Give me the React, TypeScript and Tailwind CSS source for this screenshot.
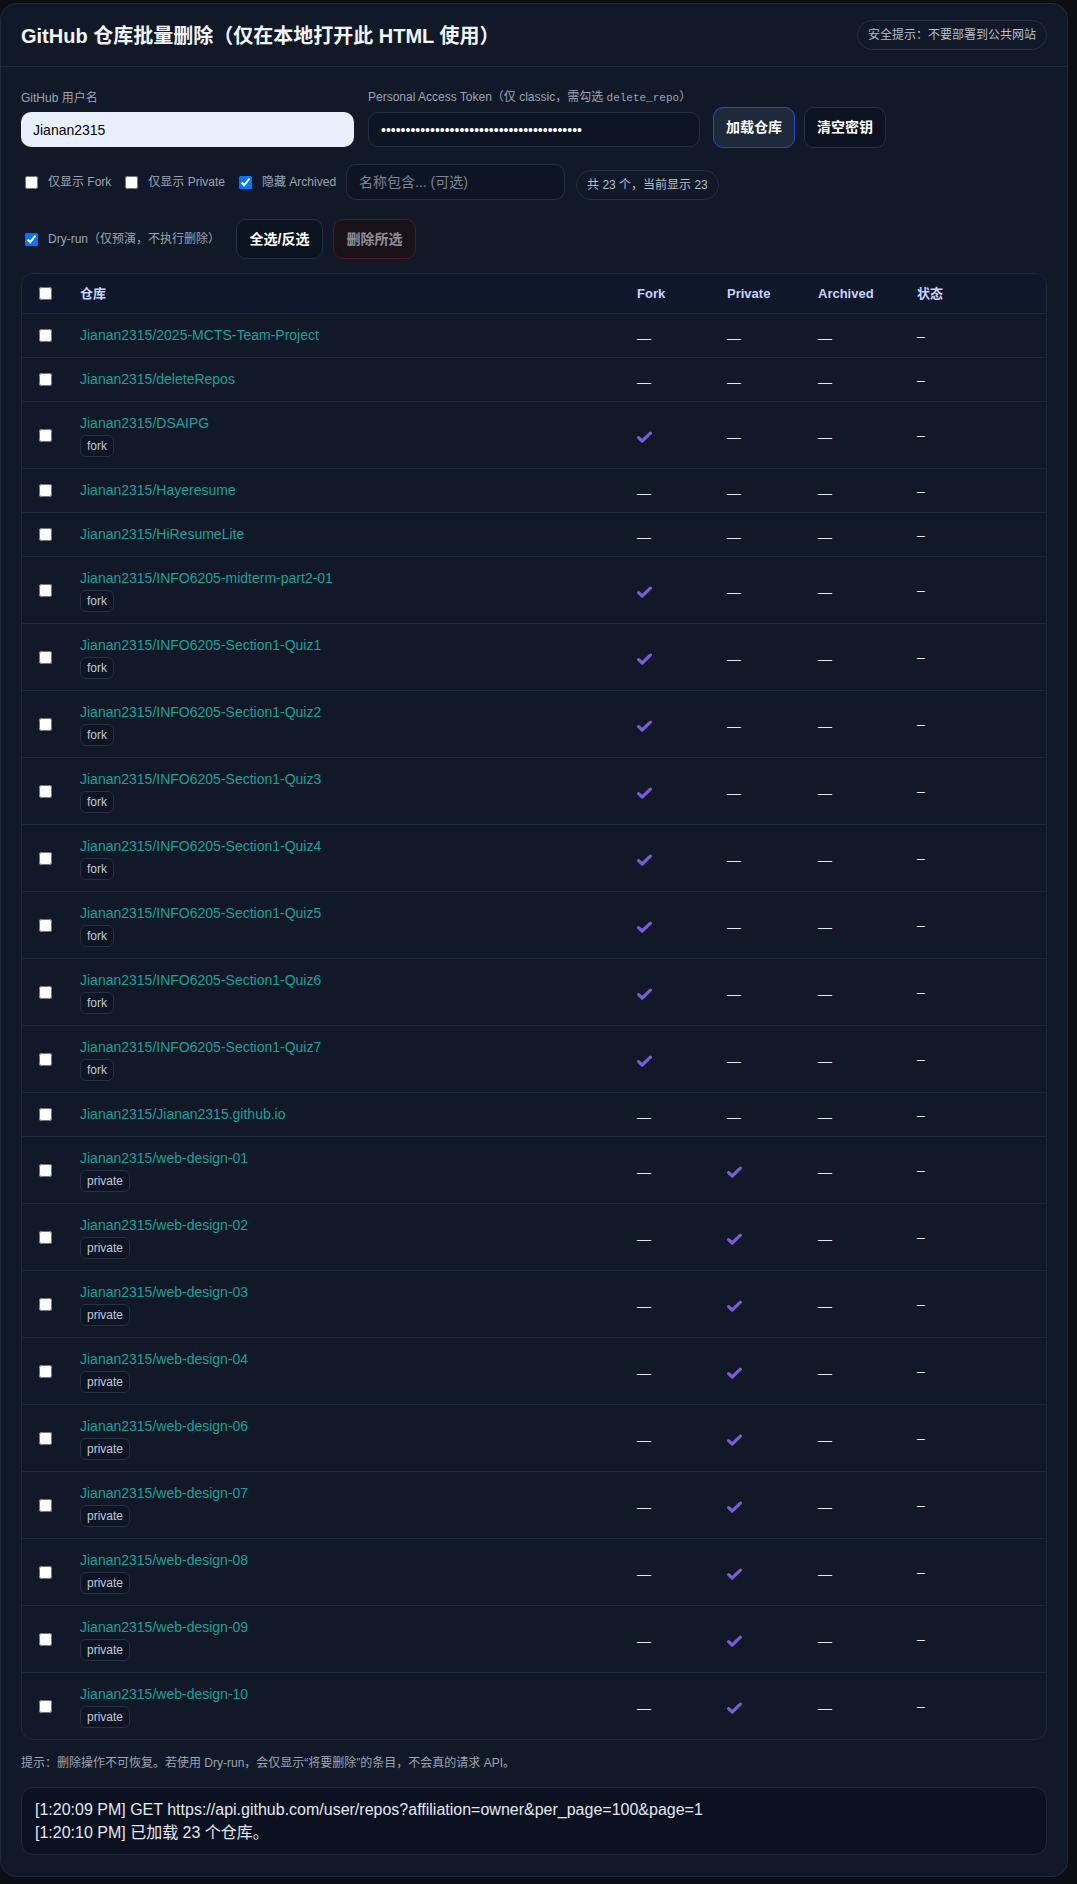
import { useState } from "react";

interface Repo {
  name: string;
  fork: boolean;
  priv: boolean;
}

const repos: Repo[] = [
  { name: "2025-MCTS-Team-Project", fork: false, priv: false },
  { name: "deleteRepos", fork: false, priv: false },
  { name: "DSAIPG", fork: true, priv: false },
  { name: "Hayeresume", fork: false, priv: false },
  { name: "HiResumeLite", fork: false, priv: false },
  { name: "INFO6205-midterm-part2-01", fork: true, priv: false },
  { name: "INFO6205-Section1-Quiz1", fork: true, priv: false },
  { name: "INFO6205-Section1-Quiz2", fork: true, priv: false },
  { name: "INFO6205-Section1-Quiz3", fork: true, priv: false },
  { name: "INFO6205-Section1-Quiz4", fork: true, priv: false },
  { name: "INFO6205-Section1-Quiz5", fork: true, priv: false },
  { name: "INFO6205-Section1-Quiz6", fork: true, priv: false },
  { name: "INFO6205-Section1-Quiz7", fork: true, priv: false },
  { name: "Jianan2315.github.io", fork: false, priv: false },
  { name: "web-design-01", fork: false, priv: true },
  { name: "web-design-02", fork: false, priv: true },
  { name: "web-design-03", fork: false, priv: true },
  { name: "web-design-04", fork: false, priv: true },
  { name: "web-design-06", fork: false, priv: true },
  { name: "web-design-07", fork: false, priv: true },
  { name: "web-design-08", fork: false, priv: true },
  { name: "web-design-09", fork: false, priv: true },
  { name: "web-design-10", fork: false, priv: true },
];

const cols = "grid grid-cols-[58px_557px_90px_91px_99px_1fr] items-center";

// ✔ / — para as colunas Fork / Private / Archived
function Flag({ on }: { on: boolean }) {
  if (on) {
    return (
      <svg width="15" height="12" viewBox="0 0 15 12" className="translate-y-[2px]">
        <path d="M1.6 6.6 L5.2 10 L13.4 2.2" fill="none" stroke="#7d5bd6" strokeWidth="3.2" strokeLinecap="round" strokeLinejoin="round" />
      </svg>
    );
  }
  return <span className="block translate-y-[2px] text-[#e5e7eb]">—</span>;
}

export default function App() {
  const [token] = useState('ghp_aB3dE5fG7hI9jK1lM3nO5pQ7rS9tU1vW3xY5z');

  return (
    <main className="min-h-screen bg-[#0c0e13] font-['Liberation_Sans','Noto_Sans_CJK_SC',sans-serif] pt-[3px]">
      <div className="w-[1068px] bg-[#111827] border border-[#1f2937] rounded-[16px]">

        <div className="h-[63px] px-5 flex items-center justify-between border-b border-[#1f2937]">
          <h1 className="text-[20px] font-bold text-[#f1f5f9] pt-[2px]">GitHub 仓库批量删除（仅在本地打开此 HTML 使用）</h1>
          <span className="h-[30px] px-[10px] flex items-center rounded-full border border-[#263041] text-[12px] text-[#b4bfcd]">
            安全提示：不要部署到公共网站
          </span>
        </div>

        <div className="px-5 pt-[22px] pb-[21px]">

          <div className="flex items-end">
            <div className="w-[333px] flex flex-col gap-[6px] mb-px">
              <label className="text-[12px] leading-4 text-[#9aa5b4]">GitHub 用户名</label>
              <input value="Jianan2315" readOnly
                className="h-[35px] rounded-[10px] bg-[#e8f0fe] text-black text-[14px] px-3 outline-none" />
            </div>
            <div className="w-[332px] ml-[14px] flex flex-col gap-[6px] mb-px">
              <label className="text-[12px] leading-4 text-[#9aa5b4] whitespace-nowrap">
                Personal Access Token（仅 classic，需勾选 <code className="font-['Liberation_Mono',monospace] text-[11px]">delete_repo</code>）
              </label>
              <input type="password" value={token} readOnly
                className="h-[35px] rounded-[10px] bg-[#0d1424] border border-[#263041] text-white text-[14px] px-3 outline-none" />
            </div>
            <button className="ml-[13px] w-[82px] h-[41px] rounded-[10px] bg-[#1e293b] border border-[#1d4ed8] text-white text-[14px] font-bold">加载仓库</button>
            <button className="ml-[9px] w-[82px] h-[41px] rounded-[10px] bg-[#0b1220] border border-[#263041] text-white text-[14px] font-bold">清空密钥</button>
          </div>

          <div className="mt-4 h-[36px] flex items-center gap-[10px] text-[12px] text-[#9aa5b4]">
            <label className="flex items-center gap-[10px] pl-[4px]">
              <input type="checkbox" className="w-[13px] h-[13px]" />
              <span>仅显示 Fork</span>
            </label>
            <label className="flex items-center gap-[10px] pl-[4px]">
              <input type="checkbox" className="w-[13px] h-[13px]" />
              <span>仅显示 Private</span>
            </label>
            <label className="flex items-center gap-[10px] pl-[4px]">
              <input type="checkbox" defaultChecked className="w-[13px] h-[13px]" />
              <span>隐藏 Archived</span>
            </label>
            <input placeholder="名称包含... (可选)"
              className="w-[219px] h-[36px] rounded-[10px] bg-[#0d1424] border border-[#263041] text-white text-[14px] px-3 placeholder-[#7b8594] outline-none" />
            <span className="self-end ml-px h-[30px] px-[10px] flex items-center rounded-full border border-[#263041] text-[12px] text-[#b4bfcd]">
              共 23 个，当前显示 23
            </span>
          </div>

          <div className="mt-[19px] h-[40px] flex items-center text-[12px] text-[#9aa5b4]">
            <label className="flex items-center gap-[10px] pl-[4px]">
              <input type="checkbox" defaultChecked className="w-[13px] h-[13px]" />
              <span>Dry-run（仅预演，不执行删除）</span>
            </label>
            <button className="ml-[16px] w-[87px] h-[40px] rounded-[10px] bg-[#0b1220] border border-[#263041] text-white text-[14px] font-bold">全选/反选</button>
            <button className="ml-[10px] w-[83px] h-[40px] rounded-[10px] bg-[#191219] border border-[#4f1a22] text-[#8e8f98] text-[14px] font-bold">删除所选</button>
          </div>

          <div className="mt-[14px] border border-[#1f2937] rounded-[12px] overflow-hidden">
            <div className={`${cols} h-[40px] bg-[#0f172a] border-b border-[#1f2937] text-[13px] font-bold text-[#c7d2fe]`}>
              <div className="pl-[17px] flex"><input type="checkbox" className="w-[13px] h-[13px]" /></div>
              <div>仓库</div>
              <div>Fork</div>
              <div>Private</div>
              <div>Archived</div>
              <div>状态</div>
            </div>
            {repos.map((r, i) => (
              <div key={r.name}
                className={`${cols} py-[11px] text-[14px] leading-5 ${i < repos.length - 1 ? 'border-b border-[#1f2937]' : ''}`}>
                <div className="pl-[17px] flex"><input type="checkbox" className="w-[13px] h-[13px]" /></div>
                <div className="flex flex-col items-start">
                  <span className="leading-[21px] text-[#17a39b]">Jianan2315/{r.name}</span>
                  {(r.fork || r.priv) && (
                    <span className="mt-px h-[22px] px-[6px] flex items-center rounded-[6px] border border-[#263041] bg-[#0d1424] text-[12px] text-[#c2cad6]">
                      {r.fork ? 'fork' : 'private'}
                    </span>
                  )}
                </div>
                <div className="flex"><Flag on={r.fork} /></div>
                <div className="flex"><Flag on={r.priv} /></div>
                <div className="flex"><Flag on={false} /></div>
                <div className="text-[#e5e7eb]">–</div>
              </div>
            ))}
          </div>

          <p className="mt-[15px] text-[12px] leading-4 text-[#9aa5b4]">
            提示：删除操作不可恢复。若使用 Dry-run，会仅显示“将要删除”的条目，不会真的请求 API。
          </p>

          <div className="mt-4 rounded-[12px] border border-[#1f2937] bg-[#0b1120] px-[13px] py-[10px] text-[16px] leading-[23px] text-[#e2e8f0]">
            <div>[1:20:09 PM] GET https://api.github.com/user/repos?affiliation=owner&amp;per_page=100&amp;page=1</div>
            <div>[1:20:10 PM] 已加载 23 个仓库。</div>
          </div>

        </div>
      </div>
    </main>
  );
}
